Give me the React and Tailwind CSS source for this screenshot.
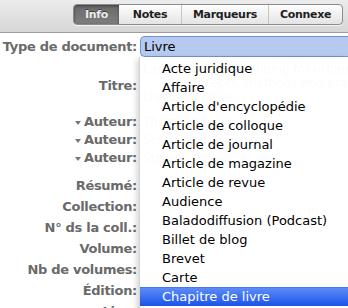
const TABS = [
  { label: 'Info', w: 'w-[45px]', active: true },
  { label: 'Notes', w: 'w-[62px]' },
  { label: 'Marqueurs', w: 'w-[87px]' },
  { label: 'Connexe', w: 'w-[74px]' },
];

const TYPES = [
  'Acte juridique',
  'Affaire',
  "Article d'encyclopédie",
  'Article de colloque',
  'Article de journal',
  'Article de magazine',
  'Article de revue',
  'Audience',
  'Baladodiffusion (Podcast)',
  'Billet de blog',
  'Brevet',
  'Carte',
  'Chapitre de livre',
];

const LOWER = ['Résumé:', 'Collection:', 'N° ds la coll.:', 'Volume:', 'Nb de volumes:', 'Édition:', 'Lieu:'];

function Label({ children, arrow }) {
  return (
    <div className="w-[137px] shrink-0 flex items-center justify-end gap-[3px] font-bold text-[13px] tracking-[-0.3px] text-[#6a6a6a]">
      {arrow && (
        <svg width="6" height="4" viewBox="0 0 6 4" className="mt-[1px]">
          <path d="M0 0 L6 0 L3 4 Z" fill="#777" />
        </svg>
      )}
      <span>{children}</span>
    </div>
  );
}

export default function App() {
  return (
    <div
      className="relative w-[348px] h-[308px] overflow-hidden bg-white text-[12px] leading-[18px]"
      style={{ fontFamily: '"DejaVu Sans", "Liberation Sans", sans-serif' }}
    >
      {/* Toolbar */}
      <div className="h-[33px] flex items-start pt-[4px] pl-[73px] bg-gradient-to-b from-[#ececec] to-[#d6d6d6] border-b border-[#9d9d9d]">
        <div className="flex h-[21px] rounded-[4px] border border-[#8c8c8c] bg-gradient-to-b from-[#fdfdfd] to-[#e4e4e4] overflow-hidden shadow-[0_1px_0_rgba(255,255,255,0.7)]">
          {TABS.map(({ label, w, active }, i) => (
            <div
              key={label}
              className={
                active
                  ? `${w} flex items-center justify-center font-bold text-[11px] tracking-[-0.3px] text-[#eeeeee] bg-gradient-to-b from-[#6a6a6a] to-[#7e7e7e] shadow-[inset_0_1px_3px_rgba(0,0,0,0.45)] [text-shadow:0_-1px_0_rgba(0,0,0,0.5)]`
                  : `${w} flex items-center justify-center font-bold text-[11px] tracking-[-0.3px] text-[#1e1e1e] ${i > 1 ? 'border-l border-[#c4c4c4]' : ''}`
              }
            >
              {label}
            </div>
          ))}
        </div>
      </div>

      {/* Form */}
      <div className="flex flex-col">
        <div className="flex items-center h-[24px] pt-[3px]">
          <Label>Type de document:</Label>
          <div className="ml-[3px] flex-1 h-[21px] flex items-center pl-[3px] bg-[#b6caf0] border border-[#6f93dc] border-r-0 rounded-l-[5px] text-[13px] text-black">
            Livre
          </div>
        </div>

        <div className="flex h-[56px] pt-[1px]">
          <Label>Titre:</Label>
          <div className="ml-[6px] flex-1 h-[18px] text-[#888] leading-[14px] pt-[4px] whitespace-nowrap">
            <div>Landscape and planning for urban design</div>
            <div className="pl-[40px]">concepts, methods and practices</div>
            <div>changing cities</div>
          </div>
        </div>

        {['Thompson, Ian', 'Schneider, Anne', 'Steiner, Frederick'].map(n => (
          <div key={n} className="flex h-[18px]">
            <Label arrow>Auteur:</Label>
            <div className="ml-[6px] text-[#888] whitespace-nowrap">{n}</div>
          </div>
        ))}

        <div className="flex flex-col mt-[8px]">
          {LOWER.map(l => (
            <div key={l} className="flex items-center h-[21px]">
              <Label>{l}</Label>
            </div>
          ))}
        </div>
      </div>

      {/* Popup menu */}
      <div className="absolute left-[139px] top-[57px] right-0 bottom-[-20px] pt-[2px] bg-white/[0.96] border-l border-[#d4d4d4] shadow-[-2px_2px_6px_rgba(0,0,0,0.18)] text-[13px] text-black">
        {TYPES.map((t, i) => (
          <div
            key={t}
            className={
              i === TYPES.length - 1
                ? 'h-[19px] flex items-center pl-[22px] text-white bg-gradient-to-b from-[#5d8cf6] to-[#1b51ea] border-t border-[#4577ee]'
                : 'h-[19px] flex items-center pl-[22px]'
            }
          >
            {t}
          </div>
        ))}
      </div>
    </div>
  );
}
